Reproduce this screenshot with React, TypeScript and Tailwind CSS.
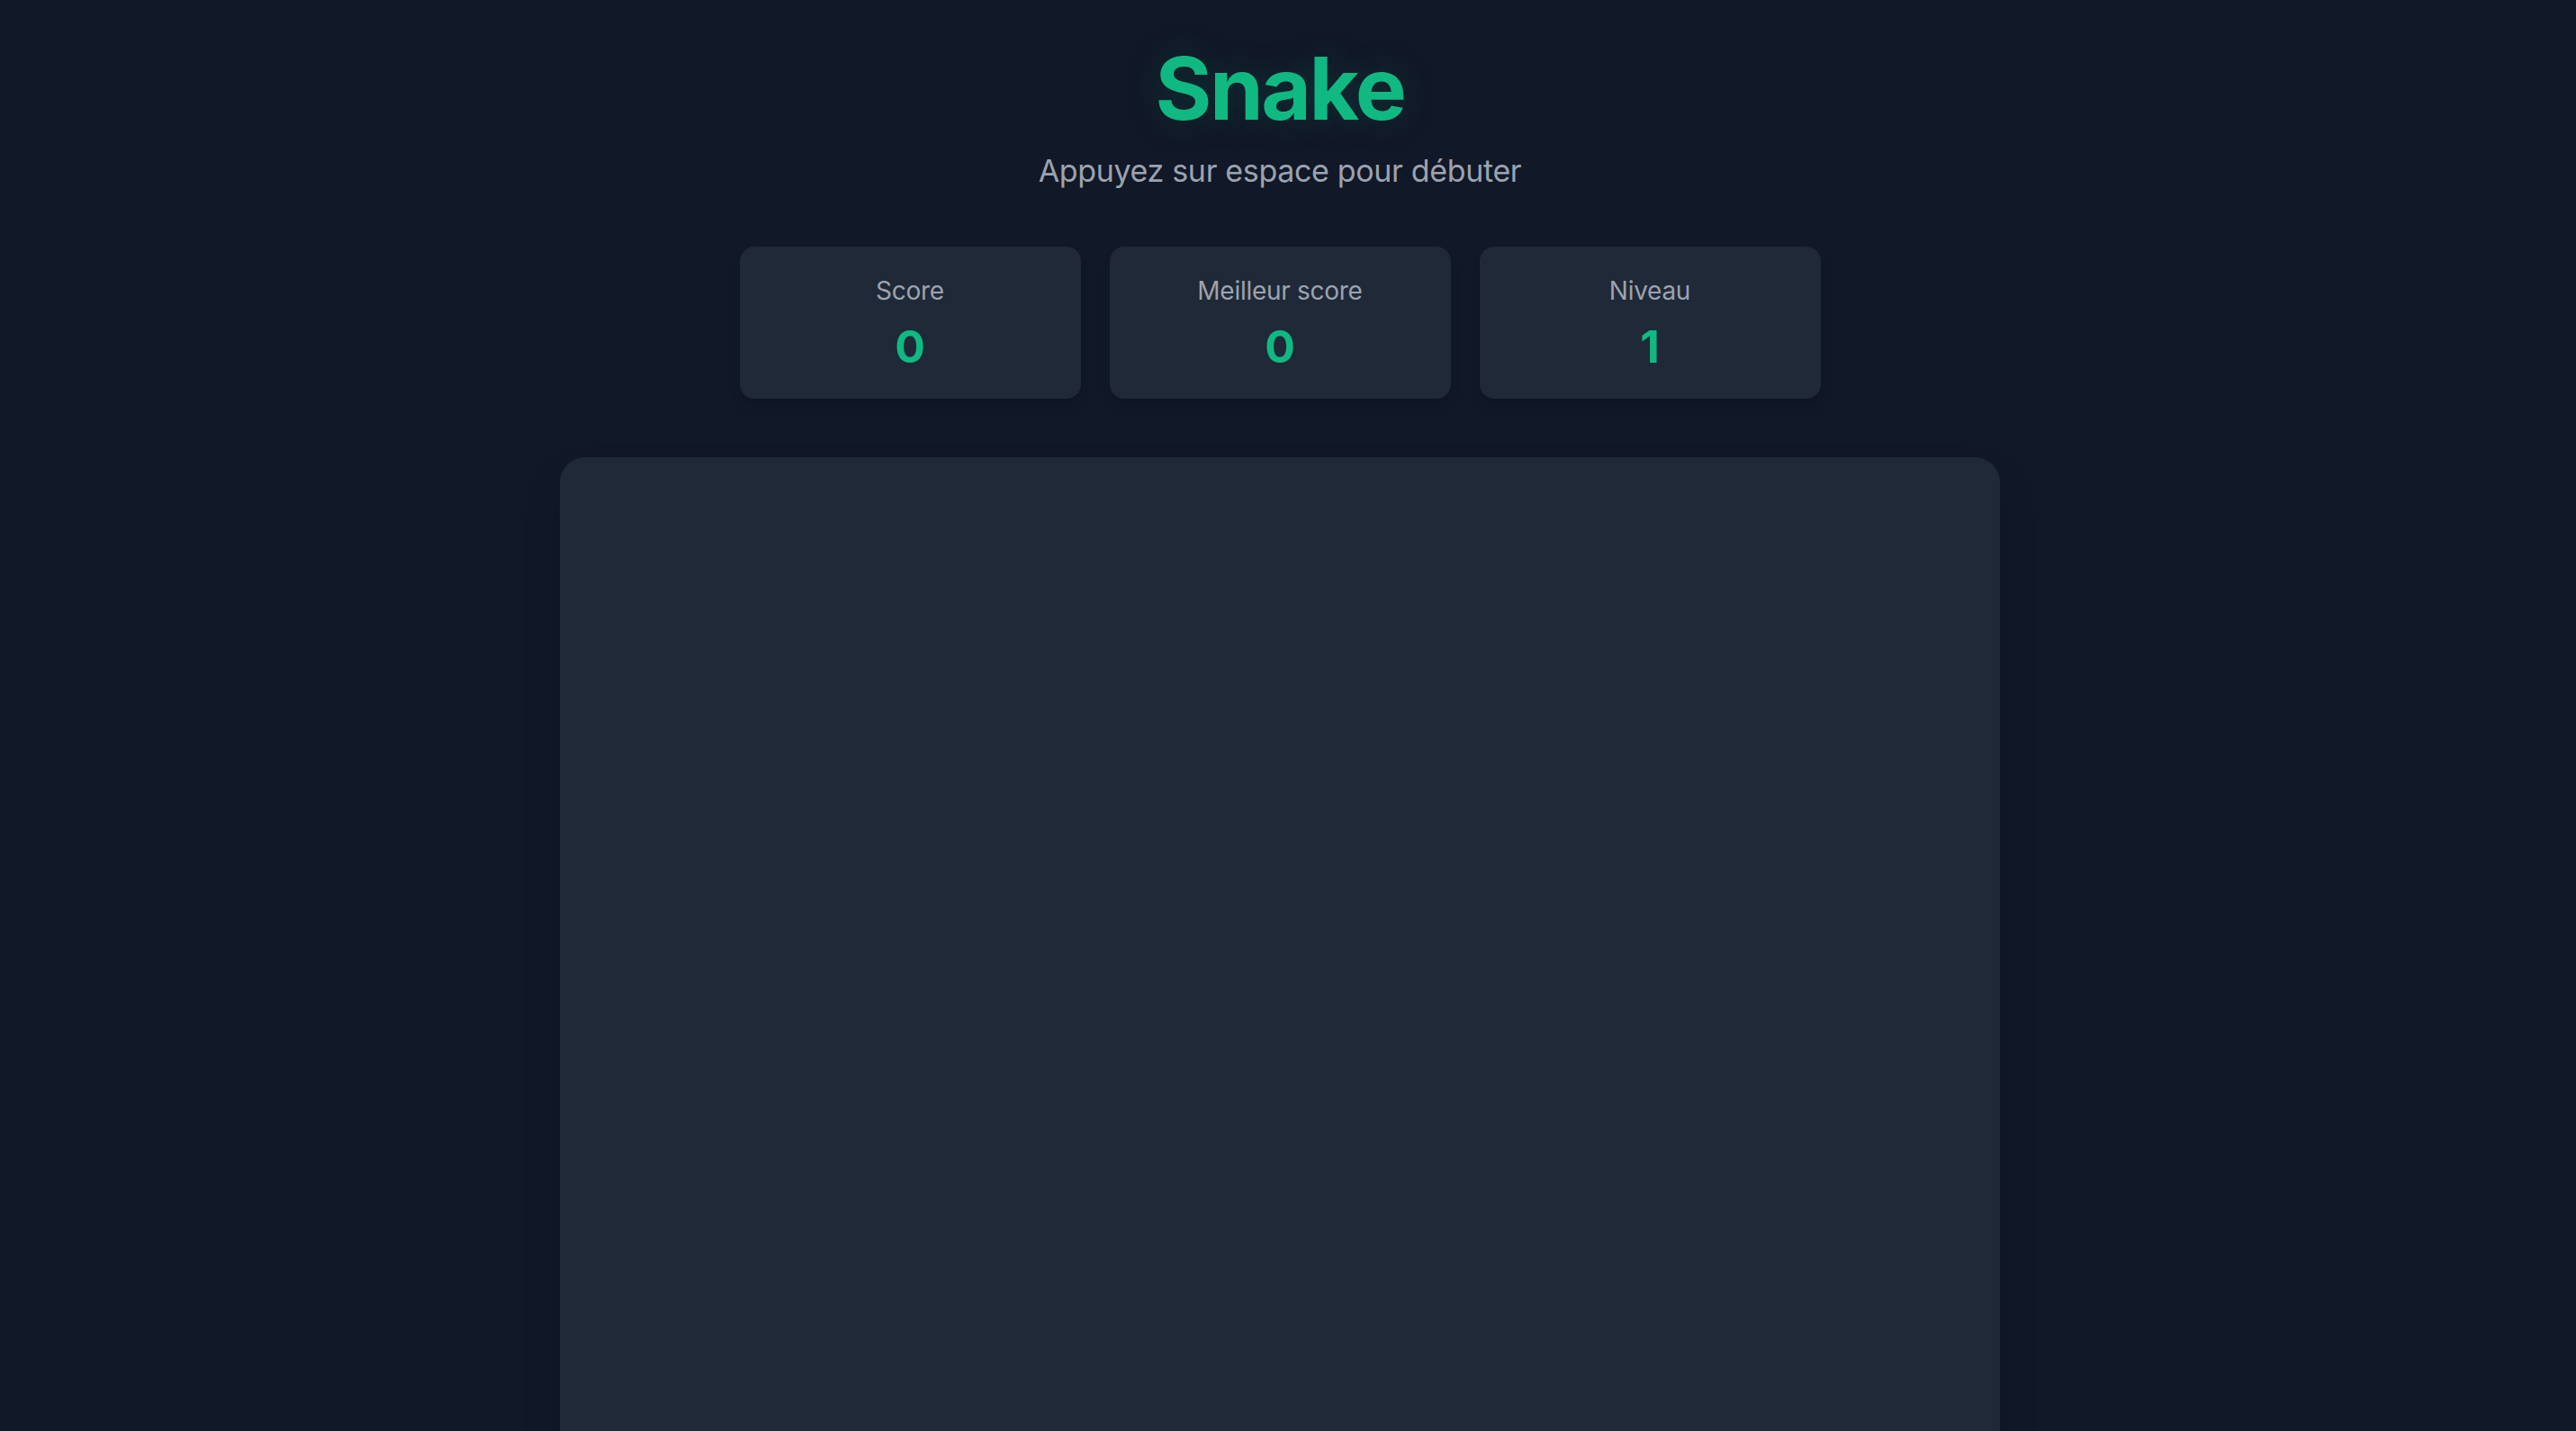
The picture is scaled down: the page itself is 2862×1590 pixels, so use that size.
const stats = [
  { label: "Score", value: "0" },
  { label: "Meilleur score", value: "0" },
  { label: "Niveau", value: "1" },
];

const StatCard = ({ label, value }: { label: string; value: string }) => (
  <div className="flex h-[169px] w-[379px] flex-col items-center rounded-[16px] bg-[#1f2937] pt-[28px] shadow-lg">
    <p className="text-[28px] leading-[43px] tracking-[-0.01em] text-[#9ca3af]">
      {label}
    </p>
    <p className="mt-[15px] text-[50px] font-bold leading-[50px] text-[#10b981]">
      {value}
    </p>
  </div>
);

export default function App() {
  return (
    <div className="flex min-h-screen flex-col items-center bg-[#111827] pt-[50px] pr-[18px] font-['Inter',sans-serif]">
      <h1 className="text-[96px] font-bold leading-[96px] tracking-[-0.025em] text-[#10b981] [text-shadow:0_0_40px_rgba(16,185,129,0.18)]">
        Snake
      </h1>
      <p className="mt-[17px] text-[34px] leading-[54px] tracking-[-0.01em] text-[#9ca3af]">
        Appuyez sur espace pour débuter
      </p>

      <div className="mt-[57px] flex gap-[32px]">
        {stats.map((s) => (
          <StatCard key={s.label} label={s.label} value={s.value} />
        ))}
      </div>

      <div className="mt-[65px] mb-[60px] h-[1600px] w-[1600px] rounded-[28px] bg-[#1f2937] shadow-2xl" />
    </div>
  );
}
